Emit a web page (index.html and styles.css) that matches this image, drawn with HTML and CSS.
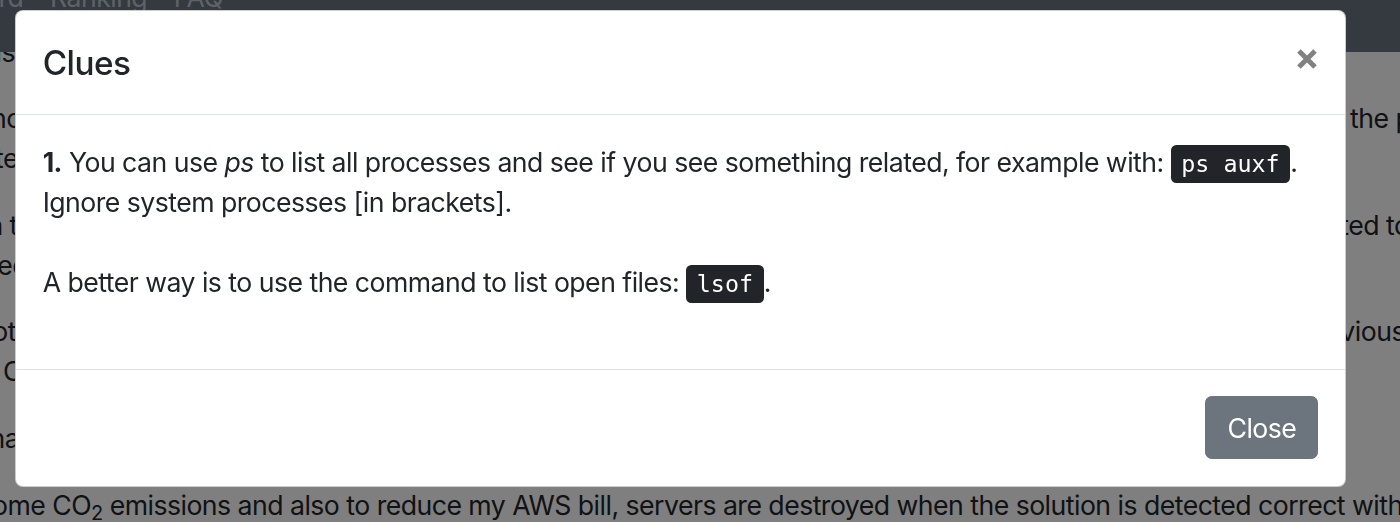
FILE: index.html
```html
<!DOCTYPE html>
<html lang="en">
<head>
<meta charset="utf-8">
<title>Clues</title>
<link rel="stylesheet" href="styles.css">
</head>
<body>
<nav class="navbar">
  <ul class="nav">
    <li class="nav-item nav-item-cut"><a class="nav-link" href="#">Leaderboard</a></li>
    <li class="nav-item"><a class="nav-link" href="#">Ranking</a></li>
    <li class="nav-item"><a class="nav-link" href="#">FAQ</a></li>
  </ul>
</nav>

<main class="page">
  <div class="line head"><span class="lt lt-this"><span>About this</span></span></div>
  <div class="para">
    <div class="line"><span class="lt lt-once"><span>Find the process once</span></span><span class="rt rt-process">the process that holds it</span></div>
    <div class="line"><span class="lt lt-write"><span>and write</span></span></div>
  </div>
  <div class="para">
    <div class="line"><span class="lt lt-inthe"><span>Look in the</span></span><span class="rt rt-connected">connected to the server</span></div>
    <div class="line"><span class="lt lt-used"><span>it is used</span></span></div>
  </div>
  <div class="para">
    <div class="line"><span class="lt lt-not"><span>it is not</span></span><span class="rt rt-previous">previous challenge</span></div>
    <div class="line"><span class="lt lt-c"><span>the C</span></span></div>
  </div>
  <div class="para">
    <div class="line"><span class="lt lt-final"><span>Good luck and have fun with the final</span></span></div>
  </div>
  <div class="para">
    <p class="bottom-line">ome CO<sub>2</sub> emissions and also to reduce my AWS bill, servers are destroyed when the solution is detected correct within the time limit.</p>
  </div>
</main>

<div class="backdrop"></div>

<div class="modal" role="dialog" aria-labelledby="clues-title">
  <div class="modal-dialog">
    <div class="modal-content">
      <div class="modal-header">
        <h5 class="modal-title" id="clues-title">Clues</h5>
        <button type="button" class="close" aria-label="Close">
          <svg class="close-icon" width="22" height="22" viewBox="0 0 22 22" aria-hidden="true"><path d="M3 3 L19 19 M19 3 L3 19" stroke="#808080" stroke-width="5" fill="none"/></svg>
        </button>
      </div>
      <div class="modal-body">
        <p><strong>1.</strong> You can use <em>ps</em> to list all processes and see if you see something related, for example with: <kbd>ps auxf</kbd>. Ignore system processes [in brackets].</p>
        <p>A better way is to use the command to list open files: <kbd>lsof</kbd>.</p>
      </div>
      <div class="modal-footer">
        <button type="button" class="btn btn-secondary">Close</button>
      </div>
    </div>
  </div>
</div>
</body>
</html>
```

FILE: styles.css
```css
* { box-sizing: border-box; }

html, body {
  margin: 0;
  height: 100%;
}

body {
  font-family: Inter, "Liberation Sans", sans-serif;
  font-size: 26.67px;
  line-height: 40px;
  letter-spacing: -0.02em;
  color: #212529;
  background: #fff;
  overflow: hidden;
}

/* ---------- navbar ---------- */
.navbar {
  position: fixed;
  top: 0;
  left: 0;
  right: 0;
  height: 52px;
  background: #343a40;
  z-index: 1045;
  overflow: hidden;
}

.nav {
  display: flex;
  list-style: none;
  margin: -23px 0 0;
  padding: 0;
}

.nav-link {
  display: block;
  padding: 0 13.33px;
  color: #5f6267;
  text-decoration: none;
  white-space: nowrap;
}

.nav-item-cut {
  width: 36.67px;
  display: flex;
  justify-content: flex-end;
}

/* ---------- page behind the modal ---------- */
.page {
  padding-top: 32px;
}

.line {
  display: flex;
  height: 40px;
  white-space: nowrap;
}

.head { margin-bottom: 26px; }
.para { margin-bottom: 26.67px; }

.lt {
  flex: none;
  display: flex;
  justify-content: flex-end;
}

.lt-this { width: 15px; }
.lt-once { width: 36px; }
.lt-write { width: 18px; }
.lt-inthe { width: 48px; }
.lt-used { width: 28px; }
.lt-not { width: 16px; }
.lt-c { width: 22px; }
.lt-final { width: 25px; }

.rt {
  flex: none;
  margin-left: auto;
}

.rt-process { width: 50px; }
.rt-connected { width: 150px; }
.rt-previous { width: 99px; }

.bottom-line {
  margin: 0 0 0 -8px;
  white-space: nowrap;
}

sub {
  font-size: 75%;
  line-height: 0;
  vertical-align: -0.25em;
}

/* ---------- modal ---------- */
.backdrop {
  position: fixed;
  inset: 0;
  background: rgba(0, 0, 0, 0.5);
  z-index: 1040;
}

.modal {
  position: fixed;
  inset: 0;
  z-index: 1050;
}

.modal-dialog {
  margin: 10px 0 0 15px;
  width: 1331px;
}

.modal-content {
  background: #fff;
  border: 1px solid rgba(0, 0, 0, 0.2);
  border-radius: 8px;
}

.modal-header {
  display: flex;
  align-items: flex-start;
  justify-content: space-between;
  padding: 26.67px;
  border-bottom: 1px solid #dee2e6;
}

.modal-title {
  margin: 0;
  font-size: 33.33px;
  font-weight: 500;
  line-height: 50px;
}

.close {
  padding: 26.67px;
  margin: -26.67px -26.67px -26.67px auto;
  background: none;
  border: 0;
  cursor: pointer;
  line-height: 0;
}

.close-icon {
  display: block;
  margin-top: 10px;
}

.modal-body {
  padding: 26.67px;
}

.modal-body p {
  margin: 0 0 40px;
}

kbd {
  font-family: "DejaVu Sans Mono", monospace;
  font-size: 23.33px;
  line-height: 1;
  letter-spacing: 0;
  padding: 5.33px 10.67px;
  color: #fff;
  background: #212529;
  border-radius: 5.33px;
}

.modal-footer {
  display: flex;
  align-items: center;
  justify-content: flex-end;
  padding: 20px;
  border-top: 1px solid #dee2e6;
}

.btn {
  margin: 6.67px;
  padding: 10.5px 21px;
  font-family: inherit;
  font-size: 26.67px;
  line-height: 40px;
  letter-spacing: -0.02em;
  font-weight: 400;
  color: #fff;
  background: #6c757d;
  border: 1px solid #6c757d;
  border-radius: 6.67px;
}
```
